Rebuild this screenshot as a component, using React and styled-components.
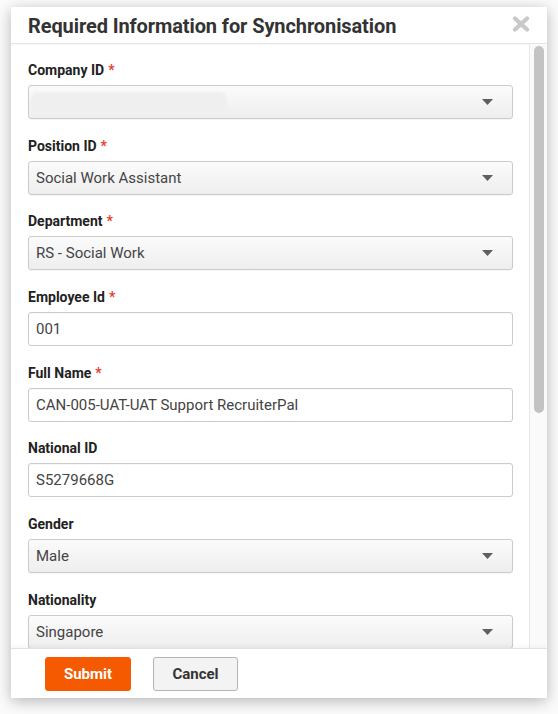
import React from "react";
import styled, { createGlobalStyle } from "styled-components";

const GlobalStyle = createGlobalStyle`
  html, body {
    margin: 0;
    padding: 0;
    background: #ffffff;
  }
  body {
    font-family: Roboto, "Liberation Sans", Arial, sans-serif;
    -webkit-font-smoothing: antialiased;
  }
  * { box-sizing: border-box; }
`;

const Backdrop = styled.div`
  width: 558px;
  height: 714px;
  padding: 7px 11px 16px 11px;
  background: #fbfbfb;
`;

const Modal = styled.div`
  width: 536px;
  height: 691px;
  display: flex;
  flex-direction: column;
  background: #ffffff;
  box-shadow: 0 3px 14px rgba(0, 0, 0, 0.28);
  overflow: hidden;
`;

const Header = styled.div`
  height: 37px;
  flex: none;
  display: flex;
  align-items: center;
  justify-content: space-between;
  padding: 0 17px 0 17px;
  border-bottom: 1px solid #e4e4e4;
  box-shadow: 0 1px 2px rgba(0, 0, 0, 0.04);
`;

const Title = styled.h2`
  margin: 0;
  padding-top: 1px;
  font-size: 20px;
  font-weight: 700;
  color: #333333;
  letter-spacing: -0.1px;
`;

const CloseButton = styled.button`
  border: 0;
  background: none;
  padding: 0;
  margin-top: -3px;
  width: 18px;
  height: 16px;
  display: flex;
  cursor: pointer;
`;

const Body = styled.div`
  flex: 1;
  min-height: 0;
  display: flex;
  overflow: hidden;
`;

const Content = styled.div`
  flex: 1;
  overflow: hidden;
  padding: 18px 16px 0 17px;
`;

const Rail = styled.div`
  width: 18px;
  flex: none;
  background: #fafafa;
  border-left: 1px solid #e8e8e8;
  padding: 2px 3px 2px 4px;
`;

const Thumb = styled.div`
  width: 10px;
  height: 367px;
  border-radius: 5px;
  background: #c3c3c3;
`;

const Field = styled.div`
  margin-bottom: 18.7px;
`;

const Label = styled.label`
  display: block;
  height: 17px;
  line-height: 17px;
  margin-bottom: 6px;
  font-size: 14px;
  font-weight: 700;
  color: #222222;
`;

const Star = styled.span`
  color: #e8412f;
  margin-left: 4px;
  font-weight: 700;
`;

const Control = styled.div`
  height: 34px;
  display: flex;
  align-items: center;
  justify-content: space-between;
  padding: 0 19px 0 7px;
  border: 1px solid #cbcbcb;
  border-radius: 3px;
  font-size: 15px;
  color: #444444;
  background: ${(p) =>
    p.$select ? "linear-gradient(#fbfbfb, #eeeeee)" : "#ffffff"};
  box-shadow: ${(p) =>
    p.$select ? "0 1px 1px rgba(0,0,0,0.04)" : "inset 0 1px 1px rgba(0,0,0,0.03)"};
`;

const Redacted = styled.span`
  display: block;
  width: 196px;
  height: 20px;
  margin-left: -5px;
  border-radius: 8px;
  background: #efefef;
  filter: blur(1px);
`;

const Caret = styled.svg`
  flex: none;
`;

const Footer = styled.div`
  height: 50px;
  flex: none;
  display: flex;
  align-items: center;
  gap: 22px;
  padding: 0 0 0 34px;
  border-top: 1px solid #e2e2e2;
  box-shadow: 0 -2px 4px rgba(0, 0, 0, 0.04);
`;

const Button = styled.button`
  height: 34px;
  width: ${(p) => p.$w}px;
  border-radius: 3px;
  font-family: inherit;
  font-size: 15px;
  font-weight: 700;
  cursor: pointer;
  color: ${(p) => (p.$primary ? "#ffffff" : "#333333")};
  background: ${(p) => (p.$primary ? "#f55a00" : "#f3f3f3")};
  border: 1px solid ${(p) => (p.$primary ? "#f55a00" : "#b4b4b4")};
`;

const fields = [
  { label: "Company ID", required: true, select: true, redacted: true },
  { label: "Position ID", required: true, select: true, value: "Social Work Assistant" },
  { label: "Department", required: true, select: true, value: "RS - Social Work" },
  { label: "Employee Id", required: true, value: "001" },
  { label: "Full Name", required: true, value: "CAN-005-UAT-UAT Support RecruiterPal" },
  { label: "National ID", value: "S5279668G" },
  { label: "Gender", select: true, value: "Male" },
  { label: "Nationality", select: true, value: "Singapore" },
];

function CaretIcon() {
  return (
    <Caret width="11" height="6" viewBox="0 0 11 6">
      <path d="M0 0 H11 L5.5 6 Z" fill="#5f5f5f" />
    </Caret>
  );
}

export default function App() {
  return (
    <>
      <GlobalStyle />
      <Backdrop>
        <Modal>
          <Header>
            <Title>Required Information for Synchronisation</Title>
            <CloseButton aria-label="Close">
              <svg width="18" height="16" viewBox="0 0 18 16">
                <path
                  d="M3 2.5 L15 13.5 M15 2.5 L3 13.5"
                  stroke="#c9c9c9"
                  strokeWidth="4.2"
                  strokeLinecap="round"
                />
              </svg>
            </CloseButton>
          </Header>
          <Body>
            <Content>
              {fields.map((f) => (
                <Field key={f.label}>
                  <Label>
                    {f.label}
                    {f.required && <Star>*</Star>}
                  </Label>
                  <Control $select={f.select}>
                    {f.redacted ? <Redacted /> : <span>{f.value}</span>}
                    {f.select && <CaretIcon />}
                  </Control>
                </Field>
              ))}
            </Content>
            <Rail>
              <Thumb />
            </Rail>
          </Body>
          <Footer>
            <Button $primary $w={86}>Submit</Button>
            <Button $w={85}>Cancel</Button>
          </Footer>
        </Modal>
      </Backdrop>
    </>
  );
}
